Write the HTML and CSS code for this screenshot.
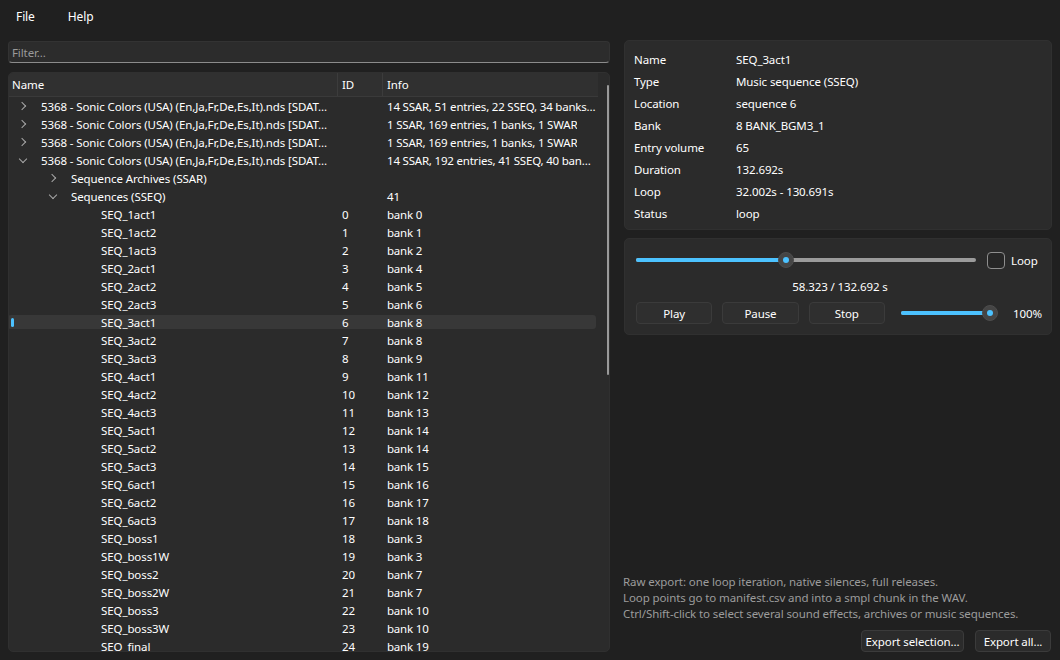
FILE: index.html
```html
<!DOCTYPE html>
<html lang="en">
<head>
    <meta charset="UTF-8">
    <title>SDAT Explorer</title>
    <link rel="stylesheet" href="styles.css">
</head>
<body>
    <div class="menubar">
        <span class="menu-item">File</span>
        <span class="menu-item">Help</span>
    </div>

    <div class="main">
        <div class="left">
            <input class="filter" type="text" placeholder="Filter...">

            <div class="tree">
                <div class="tree-view">
                    <div class="tree-header">
                        <div class="hcell col-name">Name</div>
                        <div class="hcell col-id">ID</div>
                        <div class="hcell col-info">Info</div>
                    </div>
                    <div class="tree-rows">
                        <div class="row"><div class="cell col-name"><span class="twisty closed"></span><span class="label">5368 - Sonic Colors (USA) (En,Ja,Fr,De,Es,It).nds [SDAT…</span></div><div class="cell col-id"></div><div class="cell col-info"><span class="label">14 SSAR, 51 entries, 22 SSEQ, 34 banks…</span></div></div>
                        <div class="row"><div class="cell col-name"><span class="twisty closed"></span><span class="label">5368 - Sonic Colors (USA) (En,Ja,Fr,De,Es,It).nds [SDAT…</span></div><div class="cell col-id"></div><div class="cell col-info"><span class="label">1 SSAR, 169 entries, 1 banks, 1 SWAR</span></div></div>
                        <div class="row"><div class="cell col-name"><span class="twisty closed"></span><span class="label">5368 - Sonic Colors (USA) (En,Ja,Fr,De,Es,It).nds [SDAT…</span></div><div class="cell col-id"></div><div class="cell col-info"><span class="label">1 SSAR, 169 entries, 1 banks, 1 SWAR</span></div></div>
                        <div class="row"><div class="cell col-name"><span class="twisty open"></span><span class="label">5368 - Sonic Colors (USA) (En,Ja,Fr,De,Es,It).nds [SDAT…</span></div><div class="cell col-id"></div><div class="cell col-info"><span class="label">14 SSAR, 192 entries, 41 SSEQ, 40 ban…</span></div></div>
                        <div class="row lv1"><div class="cell col-name"><span class="twisty closed"></span>Sequence Archives (SSAR)</div><div class="cell col-id"></div><div class="cell col-info"></div></div>
                        <div class="row lv1"><div class="cell col-name"><span class="twisty open"></span>Sequences (SSEQ)</div><div class="cell col-id"></div><div class="cell col-info">41</div></div>
                        <div class="row lv2"><div class="cell col-name"><span class="twisty"></span>SEQ_1act1</div><div class="cell col-id">0</div><div class="cell col-info">bank 0</div></div>
                        <div class="row lv2"><div class="cell col-name"><span class="twisty"></span>SEQ_1act2</div><div class="cell col-id">1</div><div class="cell col-info">bank 1</div></div>
                        <div class="row lv2"><div class="cell col-name"><span class="twisty"></span>SEQ_1act3</div><div class="cell col-id">2</div><div class="cell col-info">bank 2</div></div>
                        <div class="row lv2"><div class="cell col-name"><span class="twisty"></span>SEQ_2act1</div><div class="cell col-id">3</div><div class="cell col-info">bank 4</div></div>
                        <div class="row lv2"><div class="cell col-name"><span class="twisty"></span>SEQ_2act2</div><div class="cell col-id">4</div><div class="cell col-info">bank 5</div></div>
                        <div class="row lv2"><div class="cell col-name"><span class="twisty"></span>SEQ_2act3</div><div class="cell col-id">5</div><div class="cell col-info">bank 6</div></div>
                        <div class="row lv2 selected"><div class="cell col-name"><span class="twisty"></span>SEQ_3act1</div><div class="cell col-id">6</div><div class="cell col-info">bank 8</div></div>
                        <div class="row lv2"><div class="cell col-name"><span class="twisty"></span>SEQ_3act2</div><div class="cell col-id">7</div><div class="cell col-info">bank 8</div></div>
                        <div class="row lv2"><div class="cell col-name"><span class="twisty"></span>SEQ_3act3</div><div class="cell col-id">8</div><div class="cell col-info">bank 9</div></div>
                        <div class="row lv2"><div class="cell col-name"><span class="twisty"></span>SEQ_4act1</div><div class="cell col-id">9</div><div class="cell col-info">bank 11</div></div>
                        <div class="row lv2"><div class="cell col-name"><span class="twisty"></span>SEQ_4act2</div><div class="cell col-id">10</div><div class="cell col-info">bank 12</div></div>
                        <div class="row lv2"><div class="cell col-name"><span class="twisty"></span>SEQ_4act3</div><div class="cell col-id">11</div><div class="cell col-info">bank 13</div></div>
                        <div class="row lv2"><div class="cell col-name"><span class="twisty"></span>SEQ_5act1</div><div class="cell col-id">12</div><div class="cell col-info">bank 14</div></div>
                        <div class="row lv2"><div class="cell col-name"><span class="twisty"></span>SEQ_5act2</div><div class="cell col-id">13</div><div class="cell col-info">bank 14</div></div>
                        <div class="row lv2"><div class="cell col-name"><span class="twisty"></span>SEQ_5act3</div><div class="cell col-id">14</div><div class="cell col-info">bank 15</div></div>
                        <div class="row lv2"><div class="cell col-name"><span class="twisty"></span>SEQ_6act1</div><div class="cell col-id">15</div><div class="cell col-info">bank 16</div></div>
                        <div class="row lv2"><div class="cell col-name"><span class="twisty"></span>SEQ_6act2</div><div class="cell col-id">16</div><div class="cell col-info">bank 17</div></div>
                        <div class="row lv2"><div class="cell col-name"><span class="twisty"></span>SEQ_6act3</div><div class="cell col-id">17</div><div class="cell col-info">bank 18</div></div>
                        <div class="row lv2"><div class="cell col-name"><span class="twisty"></span>SEQ_boss1</div><div class="cell col-id">18</div><div class="cell col-info">bank 3</div></div>
                        <div class="row lv2"><div class="cell col-name"><span class="twisty"></span>SEQ_boss1W</div><div class="cell col-id">19</div><div class="cell col-info">bank 3</div></div>
                        <div class="row lv2"><div class="cell col-name"><span class="twisty"></span>SEQ_boss2</div><div class="cell col-id">20</div><div class="cell col-info">bank 7</div></div>
                        <div class="row lv2"><div class="cell col-name"><span class="twisty"></span>SEQ_boss2W</div><div class="cell col-id">21</div><div class="cell col-info">bank 7</div></div>
                        <div class="row lv2"><div class="cell col-name"><span class="twisty"></span>SEQ_boss3</div><div class="cell col-id">22</div><div class="cell col-info">bank 10</div></div>
                        <div class="row lv2"><div class="cell col-name"><span class="twisty"></span>SEQ_boss3W</div><div class="cell col-id">23</div><div class="cell col-info">bank 10</div></div>
                        <div class="row lv2"><div class="cell col-name"><span class="twisty"></span>SEQ_final</div><div class="cell col-id">24</div><div class="cell col-info">bank 19</div></div>
                    </div>
                </div>
                <div class="vscroll"><div class="vthumb"></div></div>
            </div>
        </div>

        <div class="right">
            <div class="info-box">
                <div class="info-row"><span class="info-label">Name</span><span>SEQ_3act1</span></div>
                <div class="info-row"><span class="info-label">Type</span><span>Music sequence (SSEQ)</span></div>
                <div class="info-row"><span class="info-label">Location</span><span>sequence 6</span></div>
                <div class="info-row"><span class="info-label">Bank</span><span>8 BANK_BGM3_1</span></div>
                <div class="info-row"><span class="info-label">Entry volume</span><span>65</span></div>
                <div class="info-row"><span class="info-label">Duration</span><span>132.692s</span></div>
                <div class="info-row"><span class="info-label">Loop</span><span>32.002s - 130.691s</span></div>
                <div class="info-row"><span class="info-label">Status</span><span>loop</span></div>
            </div>

            <div class="player">
                <div class="player-top">
                    <div class="slider seek">
                        <div class="track"><div class="fill" style="width: 44%"></div></div>
                        <div class="handle" style="left: 44%"></div>
                    </div>
                    <span class="checkbox"></span>
                    <span>Loop</span>
                </div>
                <div class="time">58.323 / 132.692 s</div>
                <div class="player-bottom">
                    <button class="btn">Play</button>
                    <button class="btn">Pause</button>
                    <button class="btn">Stop</button>
                    <div class="slider volume">
                        <div class="track"><div class="fill" style="width: 100%"></div></div>
                        <div class="handle" style="left: 100%"></div>
                    </div>
                    <span class="percent">100%</span>
                </div>
            </div>

            <div class="notes">
                Raw export: one loop iteration, native silences, full releases.<br>
                Loop points go to manifest.csv and into a smpl chunk in the WAV.<br>
                Ctrl/Shift-click to select several sound effects, archives or music sequences.
            </div>
            <div class="export-bar">
                <button class="btn export-sel">Export selection...</button>
                <button class="btn export-all">Export all...</button>
            </div>
        </div>
    </div>
</body>
</html>
```

FILE: styles.css
```css
* {
    box-sizing: border-box;
}

body {
    margin: 0;
    height: 660px;
    overflow: hidden;
    background-color: #202020;
    color: #ffffff;
    font-family: "Noto Sans", sans-serif;
    font-size: 11.5px;
    letter-spacing: -0.1px;
    display: flex;
    flex-direction: column;
}

/* Barra de menu */
.menubar {
    height: 33px;
    display: flex;
    align-items: center;
    padding-left: 16px;
    gap: 33px;
    font-size: 12px;
}

.main {
    flex: 1;
    min-height: 0;
    display: flex;
    gap: 14px;
    padding: 8px;
}

/* Coluna da esquerda */
.left {
    flex: none;
    width: 602px;
    display: flex;
    flex-direction: column;
    gap: 9px;
}

.filter {
    height: 22px;
    background-color: #2c2c2c;
    border: 1px solid #333333;
    border-bottom: 1px solid #8b8b8b;
    border-radius: 4px;
    padding: 0 3px;
    color: #ffffff;
    font-family: inherit;
    font-size: 11.5px;
    letter-spacing: -0.1px;
    outline: none;
}

.filter::placeholder {
    color: #9a9a9a;
}

.tree {
    flex: 1;
    min-height: 0;
    display: flex;
    background-color: #2b2b2b;
    border: 1px solid #303030;
    border-radius: 5px;
    overflow: hidden;
}

.tree-view {
    flex: 1;
    min-width: 0;
}

.tree-header,
.row {
    display: grid;
    grid-template-columns: 329px 45px 1fr;
}

.tree-header {
    height: 24px;
    background-color: #303030;
    border-bottom: 1px solid #3a3a3a;
}

.hcell {
    display: flex;
    align-items: center;
    border-right: 1px solid #3c3c3c;
}

.hcell.col-info {
    border-right: none;
}

.col-name {
    padding-left: 3px;
}

.col-id,
.col-info {
    padding-left: 4px;
}

.row {
    height: 18px;
    position: relative;
}

.cell {
    display: flex;
    align-items: center;
    white-space: nowrap;
    overflow: hidden;
    position: relative;
    z-index: 1;
    padding-right: 4px;
}

.cell.col-info {
    padding-right: 0;
    letter-spacing: -0.2px;
}

.cell .label {
    overflow: hidden;
    text-overflow: ellipsis;
    min-width: 0;
}

.twisty {
    width: 29px;
    height: 18px;
    flex: none;
    position: relative;
}

.lv1 .col-name {
    padding-left: 33px;
}

.lv2 .col-name {
    padding-left: 63px;
}

.twisty.closed::before {
    content: "";
    position: absolute;
    left: 7px;
    top: 6px;
    width: 5px;
    height: 5px;
    border-right: 1px solid #a8a8a8;
    border-top: 1px solid #a8a8a8;
    transform: rotate(45deg);
}

.twisty.open::before {
    content: "";
    position: absolute;
    left: 8px;
    top: 5px;
    width: 5px;
    height: 5px;
    border-right: 1px solid #a8a8a8;
    border-bottom: 1px solid #a8a8a8;
    transform: rotate(45deg);
}

/* Linha selecionada */
.row.selected::before {
    content: "";
    position: absolute;
    left: -1px;
    right: 2px;
    top: 2px;
    bottom: 2px;
    background-color: #383838;
    border-radius: 3px;
}

.row.selected::after {
    content: "";
    position: absolute;
    left: 2px;
    top: 5px;
    width: 3px;
    height: 9px;
    background-color: #4cc2ff;
    border-radius: 2px;
}

.vscroll {
    width: 11px;
    padding: 12px 0 0 9px;
}

.vthumb {
    width: 2px;
    height: 290px;
    background-color: #9a9a9a;
    border-radius: 1px;
}

/* Coluna da direita */
.right {
    flex: 1;
    min-width: 0;
    display: flex;
    flex-direction: column;
}

.info-box {
    margin-top: -1px;
    background-color: #2b2b2b;
    border: 1px solid #303030;
    border-radius: 5px;
    padding: 7px 9px 5px;
}

.info-row {
    height: 22px;
    display: flex;
    align-items: center;
}

.info-label {
    width: 102px;
}

.player {
    margin-top: 8px;
    background-color: #2b2b2b;
    border: 1px solid #303030;
    border-radius: 5px;
    padding: 11px 9px 10px 11px;
}

.player-top {
    height: 20px;
    display: flex;
    align-items: center;
}

.slider {
    position: relative;
    height: 20px;
}

.slider .track {
    position: absolute;
    left: 0;
    right: 0;
    top: 8px;
    height: 4px;
    border-radius: 2px;
    background-color: #9b9b9b;
}

.slider .fill {
    height: 100%;
    border-radius: 2px;
    background-color: #4cc2ff;
}

.slider .handle {
    position: absolute;
    top: 2px;
    width: 16px;
    height: 16px;
    margin-left: -8px;
    border-radius: 50%;
    background-color: #454545;
    border: 1px solid #4d4d4d;
}

.slider .handle::after {
    content: "";
    position: absolute;
    left: 4px;
    top: 4px;
    width: 6px;
    height: 6px;
    border-radius: 50%;
    background-color: #4cc2ff;
}

.seek {
    width: 340px;
}

.checkbox {
    width: 18px;
    height: 17px;
    margin-left: 11px;
    margin-right: 6px;
    border: 1px solid #8e8e8e;
    border-radius: 4px;
    background-color: #262626;
}

.time {
    margin-top: 9px;
    line-height: 16px;
    text-align: center;
    padding-left: 2px;
}

.player-bottom {
    margin-top: 7px;
    height: 22px;
    display: flex;
    align-items: center;
    gap: 10px;
}

.btn {
    height: 22px;
    background-color: #2f2f2f;
    border: 1px solid #3b3b3b;
    border-radius: 4px;
    color: #ffffff;
    font-family: inherit;
    font-size: 11.5px;
    letter-spacing: -0.1px;
    padding: 0;
}

.player-bottom .btn {
    width: 77px;
}

.volume {
    width: 90px;
    margin-left: 6px;
}

.percent {
    margin-left: 13px;
}

/* Notas e exportação */
.notes {
    margin-top: auto;
    margin-left: -1px;
    line-height: 16px;
    color: #9c9c9c;
}

.export-bar {
    margin-top: 8px;
    display: flex;
    justify-content: flex-end;
    gap: 11px;
    padding-right: 1px;
}

.export-bar .btn {
    background-color: #2b2b2b;
}

.export-sel {
    width: 103px;
}

.export-all {
    width: 76px;
}
```
